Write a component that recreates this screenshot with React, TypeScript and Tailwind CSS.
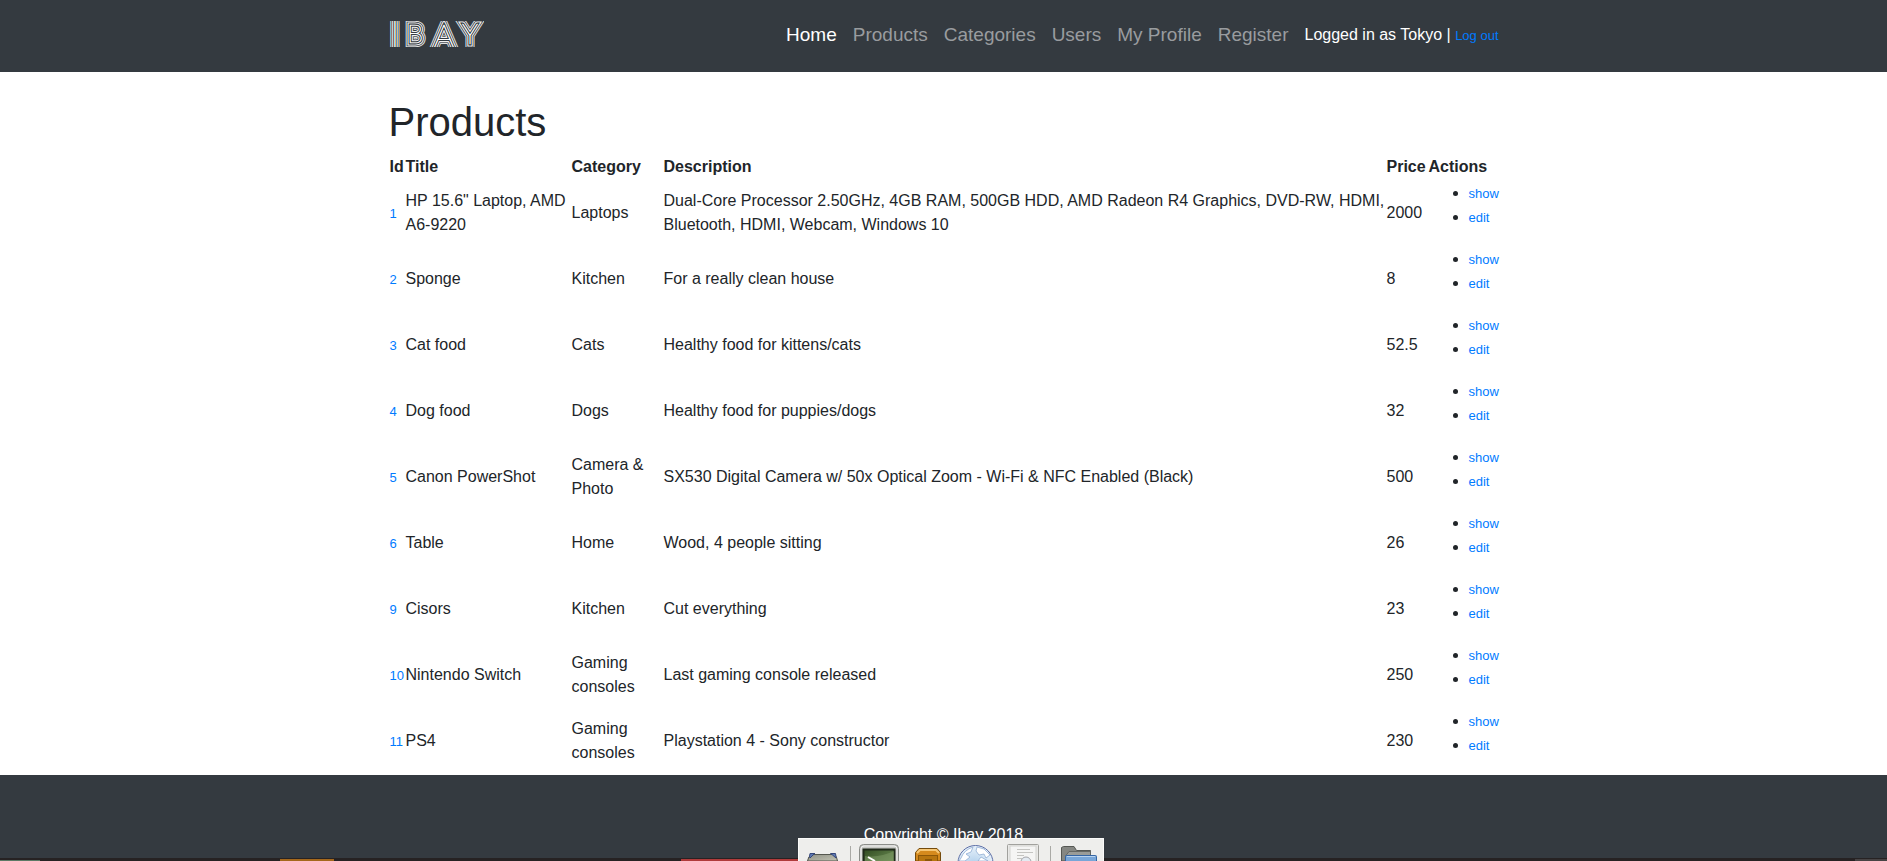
const links = ['Home', 'Products', 'Categories', 'Users', 'My Profile', 'Register'];

const products = [
  { id: 1, title: 'HP 15.6" Laptop, AMD A6-9220', category: 'Laptops', description: 'Dual-Core Processor 2.50GHz, 4GB RAM, 500GB HDD, AMD Radeon R4 Graphics, DVD-RW, HDMI, Bluetooth, HDMI, Webcam, Windows 10', price: '2000' },
  { id: 2, title: 'Sponge', category: 'Kitchen', description: 'For a really clean house', price: '8' },
  { id: 3, title: 'Cat food', category: 'Cats', description: 'Healthy food for kittens/cats', price: '52.5' },
  { id: 4, title: 'Dog food', category: 'Dogs', description: 'Healthy food for puppies/dogs', price: '32' },
  { id: 5, title: 'Canon PowerShot', category: 'Camera & Photo', description: 'SX530 Digital Camera w/ 50x Optical Zoom - Wi-Fi & NFC Enabled (Black)', price: '500' },
  { id: 6, title: 'Table', category: 'Home', description: 'Wood, 4 people sitting', price: '26' },
  { id: 9, title: 'Cisors', category: 'Kitchen', description: 'Cut everything', price: '23' },
  { id: 10, title: 'Nintendo Switch', category: 'Gaming consoles', description: 'Last gaming console released', price: '250' },
  { id: 11, title: 'PS4', category: 'Gaming consoles', description: 'Playstation 4 - Sony constructor', price: '230' },
];

const logoRings = [
  { width: 8.6, color: '#dfe0e1' },
  { width: 6.6, color: '#343a40' },
  { width: 5, color: '#f0f0f1' },
  { width: 2.8, color: '#343a40' },
  { width: 0.6, color: '#ffffff' },
];

// The I, A and Y run past the band so that their stripes end flat.
const logoLetters = [
  { letter: 'I', x: 6, y: 35, size: 40 },
  { letter: 'B', x: 26, y: 29, size: 26 },
  { letter: 'A', x: 55, y: 33, size: 32 },
  { letter: 'Y', x: 81, y: 30, size: 28 },
];

function Logo() {
  return (
    <svg width="96" height="42" viewBox="0 0 96 42" role="img" aria-label="Ibay">
      <clipPath id="logo-band">
        <rect x="0" y="7" width="95" height="26" />
      </clipPath>
      <g clipPath="url(#logo-band)" fontFamily="Lato, 'Liberation Sans', sans-serif" fontWeight="100" textAnchor="middle">
        {logoRings.map((ring) => (
          <text key={ring.width} fill={ring.color} stroke={ring.color} strokeWidth={ring.width}>
            {logoLetters.map((item) => (
              <tspan key={item.letter} x={item.x} y={item.y} fontSize={item.size}>{item.letter}</tspan>
            ))}
          </text>
        ))}
      </g>
    </svg>
  );
}

function Navbar() {
  return (
    <header className="bg-[#343a40]">
      <div className="mx-auto flex h-[72px] max-w-[1140px] items-center justify-between px-[15px] pb-0.5">
        <a href="#home" className="flex">
          <Logo />
        </a>
        <nav className="flex items-center">
          <ul className="flex">
            {links.map((label, index) => (
              <li key={label}>
                <a
                  href={'#' + label.toLowerCase().replace(' ', '-')}
                  className={index === 0 ? 'block px-2 text-[19px] text-white' : 'block px-2 text-[19px] text-[#999c9f]'}
                >
                  {label}
                </a>
              </li>
            ))}
          </ul>
          <p className="pl-2 text-white">
            Logged in as Tokyo |{' '}
            <a href="#logout" className="text-[13px] text-[#007bff]">Log out</a>
          </p>
        </nav>
      </div>
    </header>
  );
}

function ProductTable() {
  return (
    <table className="w-full table-fixed text-left">
      <colgroup>
        <col className="w-4" />
        <col className="w-[166px]" />
        <col className="w-[92px]" />
        <col />
        <col className="w-[42px]" />
        <col className="w-[71px]" />
      </colgroup>
      <thead>
        <tr>
          {['Id', 'Title', 'Category', 'Description', 'Price', 'Actions'].map((heading) => (
            <th key={heading} className="p-px font-bold">{heading}</th>
          ))}
        </tr>
      </thead>
      <tbody>
        {products.map((product) => (
          <tr key={product.id}>
            <td className="p-px">
              <a href={'#product-' + product.id} className="text-[13px] text-[#007bff]">{product.id}</a>
            </td>
            <td className="p-px">{product.title}</td>
            <td className="p-px">{product.category}</td>
            <td className="p-px">{product.description}</td>
            <td className="p-px">{product.price}</td>
            <td className="p-px">
              <ul className="mb-4 list-disc pl-10">
                <li><a href={'#show-' + product.id} className="text-[13px] text-[#007bff]">show</a></li>
                <li><a href={'#edit-' + product.id} className="text-[13px] text-[#007bff]">edit</a></li>
              </ul>
            </td>
          </tr>
        ))}
      </tbody>
    </table>
  );
}

function DockIcons() {
  return (
    <svg width="306" height="23" viewBox="0 0 306 23" className="block" aria-hidden="true">
      <defs>
        <linearGradient id="pad" x1="0" y1="0" x2="1" y2="1">
          <stop offset="0" stopColor="#8f9186" />
          <stop offset="1" stopColor="#c3c4b4" />
        </linearGradient>
        <linearGradient id="screen" x1="0" y1="0" x2="1" y2="1">
          <stop offset="0" stopColor="#2f4a20" />
          <stop offset="1" stopColor="#7d9f62" />
        </linearGradient>
        <radialGradient id="globe" cx="0.45" cy="0.6" r="0.6">
          <stop offset="0" stopColor="#a9cbea" />
          <stop offset="1" stopColor="#e9f2fa" />
        </radialGradient>
      </defs>
      <rect width="306" height="23" fill="#eeeeec" />
      <path d="M0 .5H305.500V23M.5 0V23" fill="none" stroke="#fbfbfa" />
      <path d="M9.500 23Q10 18 14 16.500H36Q39 18 39.500 23Z" fill="url(#pad)" stroke="#55574f" />
      <path d="M11.500 18.500L12 15.500H17L15 17L12 20ZM38 18.500L37.500 15.500H32.500L34.500 17L38 20Z" fill="#5d79b4" stroke="#35477a" />
      <path d="M52.500 8V23M252.500 8V23" stroke="#aaaaa6" />
      <rect x="61.500" y="6.500" width="39" height="26" rx="4" fill="#c9cac7" stroke="#8b8d89" />
      <rect x="63" y="8" width="36" height="24" rx="3" fill="none" stroke="#f1f1f0" />
      <rect x="65.500" y="11.500" width="31" height="20" fill="url(#screen)" stroke="#202a1b" strokeWidth="2" />
      <path d="M67 18Q82 20 96 13V23H67Z" fill="#86a26d" opacity=".45" />
      <path d="M70 19L77 23" stroke="#fff" strokeWidth="2" />
      <path d="M117.500 23V14.500L121 10.500H139L142.500 14.500V23Z" fill="#d58a1d" stroke="#744b0c" />
      <path d="M119 15L122 12H138L141 15" fill="none" stroke="#f6c775" strokeWidth="2" />
      <rect x="120.500" y="17.500" width="19" height="12" fill="#b67510" stroke="#8c5708" />
      <rect x="127" y="21" width="7" height="2" fill="#8c5708" />
      <circle cx="177.500" cy="25" r="17.500" fill="url(#globe)" stroke="#5b6da5" />
      <path d="M163 20Q166 12 175 9L173 14L168 16L172 19L167 23H161ZM179 9L186 11L192 17L188 20L186 16L181 17L178 13ZM183 19L190 23H180Z" fill="#fff" stroke="#85a5cf" strokeWidth=".7" />
      <rect x="209.500" y="6.500" width="31" height="22" rx="1" fill="#e9e9e7" stroke="#a1a19d" />
      <rect x="212" y="8" width="26" height="20" fill="#f5f5f4" stroke="#d3d3d0" />
      <path d="M219 11.500H232M219 14.500H235M219 17.500H226M219 20.500H224" stroke="#c4c4c1" />
      <circle cx="228" cy="24" r="5" fill="#e3eaf2" stroke="#a4a5aa" />
      <path d="M263.500 23V9.500L265.500 8.500H276L278.500 12.500H292.500V23Z" fill="#858783" stroke="#555753" />
      <path d="M267.500 23V18L271 13.500H292.500V23Z" fill="#9a9c98" stroke="#666864" />
      <rect x="267.500" y="17.500" width="31" height="9" rx="1" fill="#78a6d8" stroke="#3465a4" />
      <path d="M269 18.500H297" stroke="#b7d2ef" />
    </svg>
  );
}

function DesktopPanel() {
  return (
    <div className="fixed inset-x-0 bottom-0 flex items-end">
      <div className="flex h-[3px] flex-1 items-end bg-[#262223]">
        <div className="h-px w-10 bg-[#5c7a66]" />
        <div className="ml-60 h-0.5 w-[54px] bg-[#a5681c]" />
        <div className="ml-auto h-0.5 w-[117px] bg-[#b03b3b]" />
      </div>
      <DockIcons />
      <div className="flex h-[3px] w-[783px] items-end justify-end bg-[#262223]">
        <div className="h-0.5 w-8 bg-[#474344]" />
      </div>
    </div>
  );
}

export default function App() {
  return (
    <div className="flex min-h-screen flex-col bg-white font-['Liberation_Sans',Arial,sans-serif] text-base text-[#212529]">
      <Navbar />
      <main className="mx-auto w-full max-w-[1140px] px-[15px] pt-[26px] pb-px">
        <h1 className="mb-2 text-[40px] leading-[48px] font-medium">Products</h1>
        <ProductTable />
      </main>
      <footer className="flex-1 bg-[#343a40] pt-12 text-center text-white">
        <p>Copyright © Ibay 2018</p>
      </footer>
      <DesktopPanel />
    </div>
  );
}
